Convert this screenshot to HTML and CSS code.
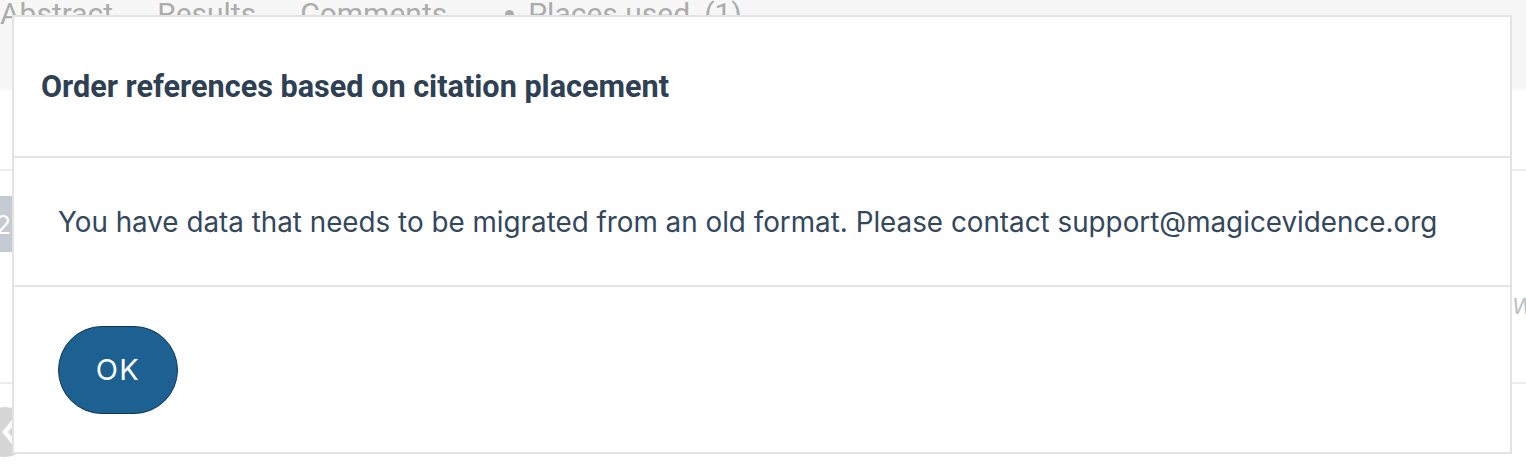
FILE: index.html
```html
<!DOCTYPE html>
<html>
<head>
<meta charset="utf-8">
<link rel="stylesheet" href="styles.css">
</head>
<body>
<div class="page">
  <div class="topbar">
    <nav class="tabs">
      <span class="tab">Abstract</span>
      <span class="tab">Results</span>
      <span class="tab">Comments</span>
      <span class="tab places"><i class="dot"></i>Places used<span class="count">(1)</span></span>
    </nav>
  </div>
  <div class="row row-a"></div>
  <div class="row row-b">
    <span class="badge">2</span>
    <span class="cut-text">W</span>
  </div>
  <div class="row row-c">
    <span class="back-btn">
      <svg width="16" height="28" viewBox="0 0 16 28"><path d="M13 3 L4 14 L13 25" fill="none" stroke="#fff" stroke-width="4.5"/></svg>
    </span>
  </div>
</div>

<div class="modal">
  <div class="modal-header">
    <h2 class="modal-title">Order references based on citation placement</h2>
  </div>
  <div class="modal-body">
    <p class="modal-text">You have data that needs to be migrated from an old format. Please contact support@magicevidence.org</p>
  </div>
  <div class="modal-footer">
    <button class="btn-ok">OK</button>
  </div>
</div>
</body>
</html>
```

FILE: styles.css
```css
html, body {
  margin: 0;
  padding: 0;
  background: #ffffff;
  overflow: hidden;
}

.page {
  width: 1526px;
  height: 470px;
  display: flex;
  flex-direction: column;
  font-family: Roboto, "Liberation Sans", sans-serif;
}

.topbar {
  height: 90px;
  background: #f7f7f7;
  flex: none;
  overflow: hidden;
}

.tabs {
  display: flex;
  gap: 44px;
  margin-top: -4px;
  font-size: 30px;
  color: #acacac;
  line-height: 36px;
  white-space: nowrap;
}

.places {
  display: flex;
  align-items: center;
  margin-left: 14px;
}

.count {
  margin-left: 14px;
}

.dot {
  width: 9px;
  height: 9px;
  border-radius: 50%;
  background: #acacac;
  margin-right: 14px;
  display: inline-block;
}

.row {
  flex: none;
  border-bottom: 2px solid #ececec;
  position: relative;
}

.row-a {
  height: 79px;
}

.row-b {
  height: 211px;
  display: flex;
  justify-content: space-between;
}

.row-c {
  flex: 1;
  border-bottom: none;
}

.badge {
  margin-top: 25px;
  margin-left: -20px;
  width: 32px;
  height: 56px;
  background: #c4cbd2;
  color: #ffffff;
  font-family: Inter, sans-serif;
  font-size: 26px;
  display: flex;
  align-items: center;
  justify-content: flex-end;
  padding-right: 1px;
  box-sizing: border-box;
}

.cut-text {
  margin-top: 121px;
  margin-right: -8px;
  width: 22px;
  font-family: Inter, sans-serif;
  font-style: italic;
  font-size: 22px;
  color: #b8bfc7;
  line-height: 28px;
}

.back-btn {
  position: absolute;
  left: -20px;
  top: 23px;
  width: 50px;
  height: 50px;
  border-radius: 50%;
  background: #d6d6d6;
  display: flex;
  align-items: center;
  justify-content: flex-end;
  padding-right: 13px;
  box-sizing: border-box;
}

.modal {
  position: absolute;
  left: 12px;
  top: 15px;
  width: 1500px;
  box-sizing: border-box;
  background: #ffffff;
  border: 2px solid #e3e3e3;
  display: flex;
  flex-direction: column;
}

.modal-header {
  height: 139px;
  padding: 0 27px;
  display: flex;
  align-items: center;
  border-bottom: 2px solid #e5e5e5;
}

.modal-title {
  margin: 0;
  font-family: Roboto, "Liberation Sans", sans-serif;
  font-weight: 700;
  font-size: 30.6px;
  color: #2e4053;
  white-space: nowrap;
}

.modal-body {
  height: 127px;
  padding: 0 44px;
  display: flex;
  align-items: center;
  border-bottom: 2px solid #e5e5e5;
}

.modal-text {
  margin: 0;
  font-family: Inter, "Noto Sans", sans-serif;
  font-size: 27.8px;
  color: #33475d;
  white-space: nowrap;
}

.modal-footer {
  height: 165px;
  padding: 0 44px;
  display: flex;
  align-items: center;
}

.btn-ok {
  width: 120px;
  height: 88px;
  border-radius: 44px;
  background: #1c6191;
  border: 1.5px solid #0f3553;
  color: #ffffff;
  font-family: Inter, "Noto Sans", sans-serif;
  font-size: 29px;
  letter-spacing: 1.5px;
  padding: 0;
  cursor: pointer;
}
```
